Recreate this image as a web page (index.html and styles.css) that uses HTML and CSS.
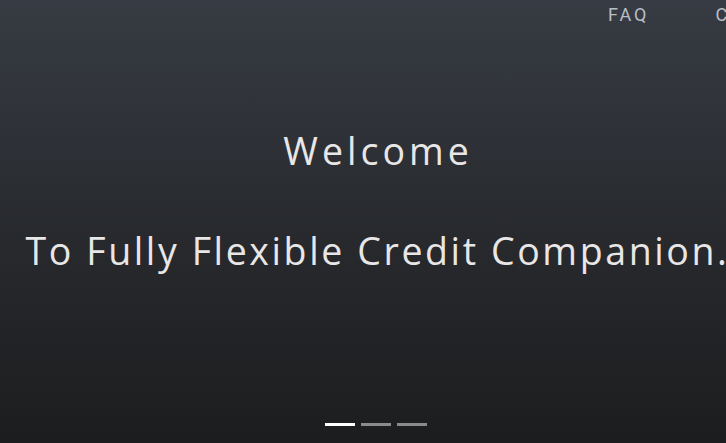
FILE: index.html
```html
<!DOCTYPE html>
<html lang="en">
<head>
<meta charset="utf-8">
<title>Welcome</title>
<link rel="stylesheet" href="styles.css">
</head>
<body>
<div class="page">
  <header class="topbar">
    <nav class="nav">
      <a class="nav-link" href="#">FAQ</a>
      <a class="nav-link" href="#">CONTACT</a>
    </nav>
  </header>
  <section class="hero">
    <h1 class="hero-title">Welcome</h1>
    <h2 class="hero-sub">To Fully Flexible Credit Companion.</h2>
  </section>
  <div class="dots">
    <span class="dot dot-active"></span>
    <span class="dot"></span>
    <span class="dot"></span>
  </div>
</div>
</body>
</html>
```

FILE: styles.css
```css
html, body {
  margin: 0;
  padding: 0;
  overflow: hidden;
  background: #1c1d1e;
}
.page {
  width: 752px;
  height: 443px;
  background: linear-gradient(to bottom, #373b43 0%, #27292d 55%, #1c1d1e 100%);
  display: flex;
  flex-direction: column;
  font-family: "Open Sans", sans-serif;
}
.topbar {
  display: flex;
  height: 30px;
}
.nav {
  display: flex;
  padding-left: 608px;
  gap: 66px;
}
.nav-link {
  font-family: Roboto, sans-serif;
  font-size: 18px;
  letter-spacing: 3px;
  color: #b9bdc5;
  text-decoration: none;
  line-height: 30px;
  white-space: nowrap;
}
.hero {
  flex: 1;
  display: flex;
  flex-direction: column;
  align-items: center;
  padding-top: 96px;
}
.hero-title, .hero-sub {
  margin: 0;
  font-weight: 400;
  font-size: 37.5px;
  line-height: 50px;
  color: #e8e6e6;
  white-space: nowrap;
}
.hero-title {
  letter-spacing: 4px;
  padding-left: 4px;
}
.hero-sub {
  margin-top: 50px;
  letter-spacing: 2.6px;
  padding-left: 3px;
}
.dots {
  display: flex;
  justify-content: center;
  gap: 6px;
  padding-bottom: 17px;
}
.dot {
  width: 30px;
  height: 3px;
  background: #8a8a8a;
}
.dot-active {
  background: #ffffff;
}
```
